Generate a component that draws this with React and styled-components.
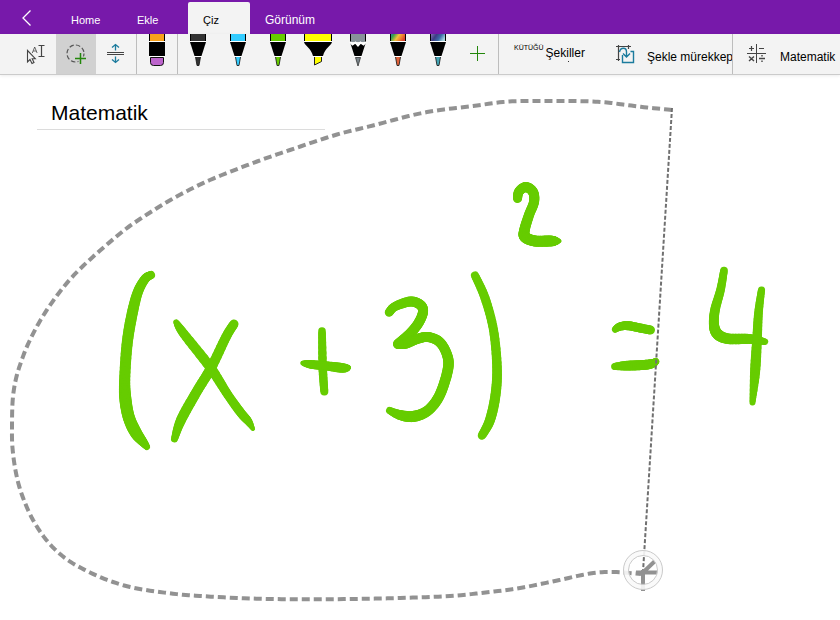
import React from "react";
import styled, { createGlobalStyle } from "styled-components";

const GlobalStyle = createGlobalStyle`
  * {
    box-sizing: border-box;
  }
  body {
    margin: 0;
    background: #fff;
    color: #000;
    font-family: "Liberation Sans", Arial, sans-serif;
  }
`;

const StyledPage = styled.div`
  display: flex;
  flex-direction: column;
  min-height: 100vh;
  overflow: hidden;
`;

const StyledHeader = styled.header`
  display: flex;
  align-items: flex-end;
  height: 34px;
  background: #7719aa;
`;

const StyledBackButton = styled.button`
  width: 56px;
  height: 34px;
  padding: 0 0 0 20px;
  border: none;
  background: none;
  text-align: left;
  cursor: pointer;
  & svg {
    display: block;
  }
`;

const StyledTabs = styled.nav`
  display: flex;
`;

const StyledTab = styled.button`
  min-width: ${(props) => (props.$active ? "62px" : "66px")};
  height: 32px;
  padding: 4px 15px 0;
  border: none;
  border-radius: 2px 2px 0 0;
  background: ${(props) => (props.$active ? "#f3f3f3" : "none")};
  color: ${(props) => (props.$active ? "#000" : "#fff")};
  font-family: inherit;
  font-size: ${(props) => (props.$large ? "12px" : "11px")};
  line-height: 14px;
  text-align: left;
  cursor: pointer;
`;

const StyledToolbar = styled.div`
  display: flex;
  height: 41px;
  padding-left: 16px;
  border-bottom: 1px solid #cbcbcb;
  background: #f3f3f3;
  box-shadow: 0 1px 3px rgba(0, 0, 0, 0.08);
`;

const StyledDivider = styled.div`
  flex: none;
  width: 1px;
  background: #bdbdbd;
`;

const StyledTool = styled.button`
  flex: none;
  width: 40px;
  height: 40px;
  padding: 0;
  border: none;
  background: ${(props) => (props.$selected ? "#d1d1d1" : "none")};
  cursor: pointer;
  & svg {
    display: block;
  }
`;

const StyledCommand = styled.button`
  display: flex;
  flex: none;
  align-items: flex-start;
  gap: ${(props) => (props.$tight ? "2px" : "12px")};
  width: ${(props) => props.$width};
  height: 40px;
  padding: ${(props) => (props.$tight ? "10px" : "14px")} 0 0 15px;
  border: none;
  background: none;
  color: #000;
  font-family: inherit;
  font-size: 12px;
  line-height: 18px;
  white-space: nowrap;
  cursor: pointer;
  & svg {
    flex: none;
    margin-top: -4px;
    overflow: visible;
  }
`;

const StyledCaption = styled.span`
  font-size: 7px;
  line-height: 8px;
`;

const StyledDotted = styled.span`
  position: relative;
  &::after {
    content: "";
    position: absolute;
    left: 22px;
    bottom: 0;
    width: 1px;
    height: 1px;
    background: #333;
  }
`;

const StyledCanvas = styled.main`
  position: relative;
  flex: 1;
  min-height: 545px;
  padding: 25px 37px 0;
`;

const StyledTitle = styled.h1`
  width: 288px;
  max-width: 100%;
  margin: 0;
  padding: 0 14px 3px;
  border-bottom: 1px solid #dcdcdc;
  font-size: 21px;
  font-weight: 400;
  line-height: 26px;
`;

const StyledInk = styled.svg`
  position: absolute;
  top: 0;
  left: 0;
  pointer-events: none;
`;

// each stroke is a list of [x, y, pressure]
const strokes = [
  [[151, 275, 8], [145, 279, 9], [137.5, 293, 10], [131.5, 317, 11], [127, 345, 11], [124.7, 380, 11], [125.5, 400, 12], [129, 418, 12], [136, 433, 12], [143, 442, 9], [147, 447, 6]],
  [[176, 322, 5], [184, 334, 9], [210, 367, 10], [228, 395, 9], [241, 413, 9], [248, 421, 8], [253, 429, 4]],
  [[234, 324, 9], [226, 337, 9.5], [211, 368, 10], [196.5, 392, 10], [181, 420, 10], [174.5, 439, 7]],
  [[322, 331, 7.5], [322.7, 367, 8.5], [324.3, 391.5, 8]],
  [[302.5, 363, 4], [311.5, 364.5, 8.5], [327, 366, 9], [343, 368, 9.5], [349, 367.5, 4]],
  [[389, 312.5, 8.5], [395, 306.5, 9], [410.5, 301.5, 10], [420.5, 305, 10], [423, 312, 10], [418.5, 323, 10], [410, 333.5, 10], [398, 344, 10]],
  [[398, 344, 10], [406, 343.5, 10], [417, 339, 10], [428, 337, 10], [439, 341.5, 10], [446, 352, 10], [448.5, 365, 10.5], [444, 384, 10.5], [437, 400, 10.5], [426.5, 411.5, 10.5], [413, 416.5, 11], [400, 415, 10], [389.5, 410.5, 7]],
  [[475, 275.5, 8], [485, 298, 9], [493.5, 330, 9], [497, 367, 9.5], [495.5, 395, 10], [490, 420, 10], [482, 435.5, 8.5]],
  [[517.5, 198.5, 9], [519, 191.5, 9.5], [526, 187, 10], [533, 192, 10], [534, 202, 10], [529, 215, 10], [524.5, 230, 10.5], [525, 237, 11], [535, 241, 11], [550, 241, 11], [555, 241, 8.5], [560, 241, 3]],
  [[615, 329.5, 6], [620, 326.5, 8], [628, 325.7, 9], [640, 328, 9], [650.5, 330, 9]],
  [[614.5, 366.5, 6.5], [626.5, 365.7, 9.5], [643, 365, 10], [652, 363.7, 9], [656, 361.3, 6.5]],
  [[724, 270.5, 7.5], [720.5, 290, 8.5], [715, 310, 9.5], [714, 325, 10], [717.5, 334, 11], [728, 338.7, 10.5], [750, 339, 10], [765, 341.7, 6.5]],
  [[761.5, 290, 7], [758.5, 313, 8.5], [757, 340, 9.5], [755, 373, 10], [752.5, 402.5, 6]],
];

const lasso = [
  [672, 110], [647, 107.5], [623, 104.5], [607, 102.5], [587, 101.3], [557, 101], [527, 101], [503, 102], [473, 106], [440, 110], [413, 115], [373, 125.5], [337, 134.5], [290, 150], [257, 161.5], [217, 177], [193, 188], [167, 202], [137, 221], [117, 236], [83, 266], [62, 289], [43, 316], [29, 342], [20.7, 363], [15.7, 380], [12.7, 400], [12, 427], [12.5, 448], [16, 473], [22, 495], [33, 520], [48, 542], [67, 559.5], [90, 572.5], [113, 582], [137, 588.5], [173, 593.7], [200, 596], [250, 598.5], [300, 599.3], [350, 599], [400, 598], [450, 596], [490, 592], [520, 588], [555, 581], [590, 573.5], [613, 572], [641, 574],
];

function curve(a, b, c, d, t) {
  return (
    0.5 *
    (2 * b +
      (c - a) * t +
      (2 * a - 5 * b + 4 * c - d) * t * t +
      (3 * b - a - 3 * c + d) * t * t * t)
  );
}

function smooth(points, steps = 8) {
  const out = [];
  for (let i = 0; i < points.length - 1; i++) {
    const p0 = points[i - 1] || points[i];
    const p1 = points[i];
    const p2 = points[i + 1];
    const p3 = points[i + 2] || p2;
    for (let s = 0; s < steps; s++) {
      out.push(p1.map((_, k) => curve(p0[k], p1[k], p2[k], p3[k], s / steps)));
    }
  }
  out.push(points[points.length - 1]);
  return out;
}

function InkStroke({ points }) {
  const samples = smooth(points);
  return (
    <g stroke="#66cc00" strokeLinecap="round">
      {samples.slice(1).map(([x, y, w], i) => (
        <line
          key={i}
          x1={samples[i][0]}
          y1={samples[i][1]}
          x2={x}
          y2={y}
          strokeWidth={w}
        />
      ))}
    </g>
  );
}

function LassoSelection() {
  return (
    <g fill="none">
      <polyline
        points={smooth(lasso).map((p) => p.join(",")).join(" ")}
        stroke="#929292"
        strokeWidth="4"
        strokeDasharray="8 4"
      />
      <path d="M672 108L643 572" stroke="#707070" strokeWidth="2" strokeDasharray="4 2" />
      <path d="M643 570V591M636 572.5H658M643 572.5L655 561" stroke="#929292" strokeWidth="4" />
      <circle cx="643" cy="570" r="17" stroke="#fafafa" strokeWidth="5" strokeOpacity="0.9" />
      <circle cx="643" cy="570" r="19.5" stroke="#cacaca" />
      <circle cx="643" cy="570" r="14.5" stroke="#cacaca" />
      <path d="M641 590.5H645" stroke="#929292" />
    </g>
  );
}

function Pen({ cap, tip }) {
  return (
    <svg width="40" height="40" viewBox="0 0 40 40">
      <path d="M12 0H28V7H12Z" fill={cap} />
      <path d="M12.5 0V7M27.5 0V7" stroke="#000" />
      <path d="M12 7.5H28M16 22.5H24" stroke="#fff" />
      <path d="M12 8H28L23.5 22H16.5Z" fill="#000" />
      <path d="M17.5 23H22.5L21 31.5H19Z" fill={tip} />
      <path d="M17.5 23L19 31.5H21L22.5 23" fill="none" stroke="#111" strokeWidth="0.8" />
    </svg>
  );
}

function Eraser() {
  return (
    <svg width="40" height="40" viewBox="0 0 40 40">
      <path d="M12 0H28V7H12Z" fill="#f8a11b" />
      <path d="M12.5 0V7M27.5 0V7" stroke="#000" />
      <path d="M12 7.5H28M12 22.5H28" stroke="#fff" />
      <path d="M12 8H28V22H12Z" />
      <path
        d="M13.5 23.5H26.5V28.5Q26.5 31.5 23.5 31.5H16.5Q13.5 31.5 13.5 28.5Z"
        fill="#bc64cc"
        stroke="#111"
      />
    </svg>
  );
}

function Highlighter() {
  return (
    <svg width="40" height="40" viewBox="0 0 40 40">
      <path d="M6 0H34V7H6Z" fill="#ffff00" />
      <path d="M6.5 0V7M33.5 0V7" stroke="#000" />
      <path d="M6 7.5H34M14 22.5H26" stroke="#fff" />
      <path d="M6 8H34C33 12 27 14 25 22H15C13 14 7 12 6 8Z" />
      <path d="M16.5 23V31L23.5 27.5V23" fill="#ffff00" stroke="#222" />
    </svg>
  );
}

function Pencil() {
  return (
    <svg width="40" height="40" viewBox="0 0 40 40">
      <path d="M12 0H28V8H12Z" fill="#88929a" />
      <path d="M12.5 0V8M27.5 0V8" stroke="#000" />
      <path d="M12 8L14.5 11L17.5 9L20 12L22.5 9L25.5 11L28 8L23.5 22H16.5Z" />
      <path
        d="M12 8L14.5 10.5L17.5 8.5L20 11.5L22.5 8.5L25.5 10.5L28 8"
        fill="none"
        stroke="#fff"
        strokeWidth="2"
      />
      <path d="M16 22.5H24" stroke="#fff" />
      <path d="M17.5 23.5H22.5L20 32Z" fill="#7b868c" stroke="#222" strokeWidth="0.7" />
    </svg>
  );
}

function App() {
  return (
    <StyledPage>
      <GlobalStyle />
      <StyledHeader>
        <StyledBackButton aria-label="Geri">
          <svg width="14" height="34" viewBox="0 0 14 34" fill="none" stroke="#fff" strokeWidth="1.3">
            <path d="M10.5 10.5L3 18L10.5 25.5" />
          </svg>
        </StyledBackButton>
        <StyledTabs>
          <StyledTab>Home</StyledTab>
          <StyledTab>Ekle</StyledTab>
          <StyledTab $active>Çiz</StyledTab>
          <StyledTab $large>Görünüm</StyledTab>
        </StyledTabs>
      </StyledHeader>

      <StyledToolbar>
        <StyledTool aria-label="Seç">
          <svg width="40" height="40" viewBox="0 0 40 40" fill="none" stroke="#444">
            <path d="M11.5 16.5V28L14 25.5L16 29.5L18 28.5L16.2 24.7H19.3Z" strokeWidth="1.1" />
            <path d="M16.3 19L18.7 13L21.1 19M17.2 17H20.2" strokeWidth="0.8" />
            <path d="M22.5 11.5H28.5M25.5 11.5V22.5M22.5 22.5H28.5" strokeWidth="1.2" />
          </svg>
        </StyledTool>
        <StyledTool $selected aria-label="Kement">
          <svg width="40" height="40" viewBox="0 0 40 40" fill="none">
            <circle cx="19.5" cy="19.5" r="8.5" stroke="#555" strokeWidth="1.2" strokeDasharray="4.5 2.2" />
            <path d="M24.5 18V30M18.5 24.5H30" stroke="#d1d1d1" strokeWidth="4" />
            <path d="M24.5 19V30M19 24.5H30" stroke="#23870b" strokeWidth="1.5" />
          </svg>
        </StyledTool>
        <StyledTool aria-label="Boşluk ekle">
          <svg width="40" height="40" viewBox="0 0 40 40" fill="none">
            <path d="M11 18.5H28M11 20.5H28" stroke="#444" />
            <path
              d="M19.5 16.5V11M16 13.5L19.5 10.5L23 13.5M19.5 22.5V28M16 25.5L19.5 28.5L23 25.5"
              stroke="#1b7b9d"
              strokeWidth="1.3"
            />
          </svg>
        </StyledTool>
        <StyledDivider />
        <StyledTool aria-label="Silgi">
          <Eraser />
        </StyledTool>
        <StyledDivider />
        <StyledTool aria-label="Siyah kalem">
          <Pen cap="#333" tip="#333" />
        </StyledTool>
        <StyledTool aria-label="Mavi kalem">
          <Pen cap="#33ccff" tip="#33ccff" />
        </StyledTool>
        <StyledTool aria-label="Yeşil kalem">
          <Pen cap="#66cc00" tip="#66cc00" />
        </StyledTool>
        <StyledTool aria-label="Vurgulayıcı">
          <Highlighter />
        </StyledTool>
        <StyledTool aria-label="Kurşun kalem">
          <Pencil />
        </StyledTool>
        <StyledTool aria-label="Gökkuşağı kalem">
          <Pen cap="url(#rainbow)" tip="#e0623a" />
        </StyledTool>
        <StyledTool aria-label="Galaksi kalem">
          <Pen cap="url(#galaxy)" tip="#43a5b5" />
        </StyledTool>
        <StyledTool aria-label="Kalem ekle">
          <svg width="40" height="40" viewBox="0 0 40 40">
            <path d="M19.5 12V27M12 19.5H27" stroke="#23870b" />
          </svg>
        </StyledTool>
        <StyledDivider />
        <StyledCommand $tight $width="101px">
          <StyledCaption>KÜTÜĞÜ</StyledCaption>
          <StyledDotted>Şekiller</StyledDotted>
        </StyledCommand>
        <StyledCommand $width="132px">
          <svg width="20" height="20" viewBox="0 0 20 20" fill="none">
            <path d="M1 2.5H16M3.5 1V17M13.5 1V5M1 15.5H5" stroke="#444" strokeWidth="1.2" />
            <path
              d="M7.5 11V18.5H18.5V7.5H15.5M4.5 8C5.5 3 11.5 3 11.5 8V12.5M8 9.5L11.5 13L15 9.5"
              stroke="#1b7b9d"
              strokeWidth="1.4"
            />
          </svg>
          Şekle mürekkep
        </StyledCommand>
        <StyledDivider />
        <StyledCommand $width="107px">
          <svg width="20" height="20" viewBox="0 0 20 20" fill="none" stroke="#444">
            <path d="M8.5 0V19M-1 9.5H18" />
            <path d="M3.5 2V7M1 4.5H6M11 4.5H16" strokeWidth="1.2" />
            <path d="M1 12.5L6 17M6 12.5L1 17M11 14.5H17M14 11V12.5M14 16.5V18" strokeWidth="1.4" />
          </svg>
          Matematik
        </StyledCommand>
      </StyledToolbar>

      <StyledCanvas>
        <StyledTitle>Matematik</StyledTitle>
        <StyledInk width="840" height="545" viewBox="0 75 840 545" role="img" aria-label="(x + 3)² = 4">
          <defs>
            <linearGradient id="rainbow" x2="1" y2="0.3">
              <stop offset="0" stopColor="#2377b8" />
              <stop offset="0.25" stopColor="#39a04a" />
              <stop offset="0.55" stopColor="#f2c13c" />
              <stop offset="0.8" stopColor="#ee7b30" />
              <stop offset="1" stopColor="#d8432e" />
            </linearGradient>
            <linearGradient id="galaxy" x2="1" y2="0.3">
              <stop offset="0" stopColor="#8d7ab8" />
              <stop offset="0.4" stopColor="#3d3b84" />
              <stop offset="0.7" stopColor="#3d6ca8" />
              <stop offset="1" stopColor="#a5d3dd" />
            </linearGradient>
          </defs>
          {strokes.map((points, i) => (
            <InkStroke key={i} points={points} />
          ))}
          <LassoSelection />
        </StyledInk>
      </StyledCanvas>
    </StyledPage>
  );
}

export default App;
